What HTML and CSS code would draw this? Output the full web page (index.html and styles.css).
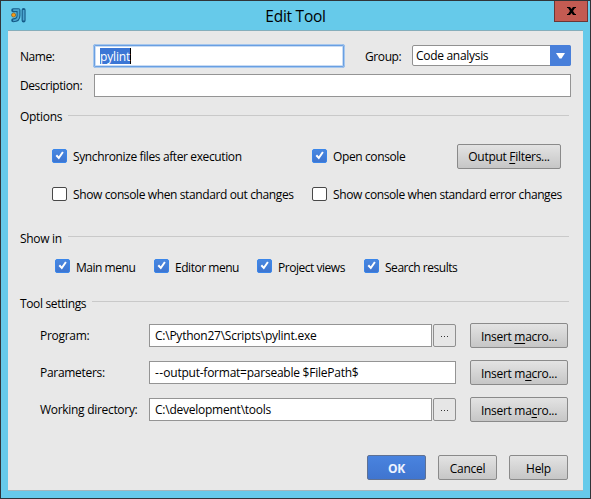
FILE: index.html
```html
<!DOCTYPE html>
<html lang="en">
<head>
<meta charset="utf-8">
<title>Edit Tool</title>
<link rel="stylesheet" href="styles.css">
</head>
<body>
<svg width="0" height="0" class="defs">
  <defs>
    <linearGradient id="blue" x1="0" y1="0" x2="0" y2="1"><stop offset="0" stop-color="#4a88e0"/><stop offset="1" stop-color="#3d74d0"/></linearGradient>
    <symbol id="on" viewBox="0 0 15 14"><rect x=".5" y=".5" width="14" height="13" rx="1.5" fill="url(#blue)" stroke="#3a86ea"/><path d="M4.3 6.3 6.8 9 10.9 3" fill="none" stroke="#fff" stroke-width="2"/></symbol>
    <symbol id="off" viewBox="0 0 15 14"><rect x=".5" y=".5" width="14" height="13" rx="1.5" fill="#fff" stroke="#484848"/></symbol>
  </defs>
</svg>
<div class="window">
  <header class="titlebar">
    <svg class="logo" width="15" height="15" viewBox="0 0 15 15">
      <path d="M2.2 2.2H7.5V7.5Q7.5 12.3 2.2 12.3M12.6 2V12.6" fill="none" stroke="#165b88" stroke-width="4" stroke-linejoin="round" stroke-linecap="round"/>
      <path d="M2.2 2.2H7.5V7.5Q7.5 12.3 2.2 12.3M12.6 2V12.6" fill="none" stroke="#4ba5d0" stroke-width="1.8"/>
      <circle cx="2.6" cy="7" r="2.1" fill="#f79a14" stroke="#7a5a2a" stroke-width=".7"/>
    </svg>
    <h1>Edit Tool</h1>
    <div class="close"><svg width="9" height="8" viewBox="0 0 9 8"><path d="M0 0H3L4.5 2 6 0H9V1H8L6 4 8 7H9V8H6L4.5 6 3 8H0V7H1L3 4 1 1H0Z"/></svg></div>
  </header>
  <main class="client">
    <div class="row name-row">
      <span class="t label">Name:</span>
      <div class="focus"><span class="t selected">pylint</span></div>
      <span class="t group">Group:</span>
      <div class="combo"><span class="t">Code analysis</span><div class="arrow"><svg width="9" height="6" viewBox="0 0 9 6"><path d="M0 0H9L5.5 5.5H3.5Z" fill="#fff"/></svg></div></div>
    </div>
    <div class="row desc-row"><span class="t label">Description:</span><div class="field"></div></div>

    <div class="heading h-options"><span class="t">Options</span><i></i></div>
    <div class="row opt-row">
      <label class="check"><svg><use href="#on"/></svg><span class="t">Synchronize files after execution</span></label>
      <label class="check"><svg><use href="#on"/></svg><span class="t">Open console</span></label>
      <div class="btn"><span class="t">Output <u>F</u>ilters...</span></div>
    </div>
    <div class="row opt-row second">
      <label class="check"><svg><use href="#off"/></svg><span class="t">Show console when standard out changes</span></label>
      <label class="check wide"><svg><use href="#off"/></svg><span class="t">Show console when standard error changes</span></label>
    </div>

    <div class="heading h-show"><span class="t">Show in</span><i></i></div>
    <div class="row show-row">
      <label class="check"><svg><use href="#on"/></svg><span class="t">Main menu</span></label>
      <label class="check"><svg><use href="#on"/></svg><span class="t">Editor menu</span></label>
      <label class="check"><svg><use href="#on"/></svg><span class="t">Project views</span></label>
      <label class="check"><svg><use href="#on"/></svg><span class="t">Search results</span></label>
    </div>

    <div class="heading h-tool"><span class="t">Tool settings</span><i></i></div>
    <div class="settings">
      <div class="setting"><span class="t">Program:</span><div class="entry"><div class="field"><span class="t">C:\Python27\Scripts\pylint.exe</span></div><div class="browse"><b></b><b></b><b></b></div></div><div class="btn"><span class="t">Insert <u>m</u>acro...</span></div></div>
      <div class="setting"><span class="t">Parameters:</span><div class="entry"><div class="field"><span class="t"><span class="dashes">--</span>output-format=parseable $FilePath$</span></div></div><div class="btn"><span class="t">Insert m<u>a</u>cro...</span></div></div>
      <div class="setting"><span class="t">Working directory:</span><div class="entry"><div class="field"><span class="t">C:\development\tools</span></div><div class="browse"><b></b><b></b><b></b></div></div><div class="btn"><span class="t">Insert ma<u>c</u>ro...</span></div></div>
    </div>
    <footer class="actions">
      <div class="btn ok"><span class="t">OK</span></div>
      <div class="btn"><span class="t">Cancel</span></div>
      <div class="btn"><span class="t">Help</span></div>
    </footer>
  </main>
</div>
</body>
</html>
```
FILE: styles.css
```css
* { box-sizing: border-box; }
body { margin: 0; overflow: hidden; font: 12px/16px "Open Sans", "Noto Sans", sans-serif; letter-spacing: -0.3px; color: #000; }
.defs { position: absolute; }
.window { width: 591px; height: 499px; border: 1px solid #303438; background: #66caea; padding: 0 7px 7px; }
.titlebar { height: 29px; display: grid; grid-template-columns: 60px 1fr 60px; }
.logo { margin: 7px 0 0 3px; }
h1 { margin: 3px 0 0; font-size: 15.5px; line-height: 24px; font-weight: 400; letter-spacing: -0.25px; text-align: center; }
.close { width: 34px; height: 21px; margin-left: 31px; border: 1px solid #6b3535; border-top: 0; background: #c35b52; display: flex; align-items: center; justify-content: center; }
.client { height: 461px; background: #e8e8e8; border-top: 1px solid #86aebb; border-bottom: 1px solid #a3b7bd; padding: 13px 12px 0; }
.t { white-space: nowrap; display: block; }
u { text-underline-offset: 2px; text-decoration-thickness: 1px; }
.row { display: flex; align-items: center; }
.name-row { height: 24px; }
.label { width: 73px; flex: none; padding-top: 2px; letter-spacing: -0.42px; }
.focus { width: 252px; height: 24px; border: 2px solid #699fe2; border-radius: 3px; box-shadow: inset 0 0 0 1px #c9dcf4; background: #fff; padding: 2px 5px; display: flex; outline: 1px solid #a6c7ed; outline-offset: -1px; }
.selected { height: 16px; line-height: 18px; background: #3b76d5; color: #fff; border-right: 1px solid #000; letter-spacing: -0.15px; }
.group { margin-left: 20px; width: 47px; padding-top: 2px; letter-spacing: -0.4px; }
.combo { width: 159px; height: 21px; margin-top: 1px; align-self: flex-start; border: 1px solid #919191; border-radius: 2px; background: #fff; display: flex; align-items: center; padding-left: 3px; }
.arrow { width: 21px; height: 21px; margin: -1px -1px -1px auto; background: #487fda; border-radius: 0 2px 2px 0; display: flex; align-items: center; justify-content: center; }
.desc-row { height: 23px; margin-top: 6px; }
.desc-row .label { width: 74px; padding-top: 1px; }
.field { height: 23px; border: 1px solid #949494; background: #fff; flex: 1; padding: 3px 5px; letter-spacing: -0.24px; }
.dashes { letter-spacing: 0.3px; }
.desc-row .field { flex: none; width: 477px; }
.heading { height: 16px; display: flex; width: 549px; }
.heading .t { width: 48px; padding-top: 1px; }
.heading i { flex: 1; height: 1px; margin-top: 7px; background: #c9c9c9; }
.h-options { margin-top: 11px; }
.h-show { margin-top: 26px; }
.h-tool { margin-top: 19px; }
.h-show .t, .h-tool .t { padding-top: 2px; }
.h-tool .t { width: 72px; letter-spacing: -0.36px; }
.check { display: flex; align-items: center; height: 16px; letter-spacing: -0.38px; }
.check svg { width: 15px; height: 14px; flex: none; margin: 0 6px 2px 0; }
.opt-row { margin: 20px 0 0 32px; display: grid; grid-template-columns: 260px 145px 104px; height: 25px; }
.opt-row.second { height: 16px; margin-top: 18px; }
.wide { grid-column: span 2; letter-spacing: -0.4px; }
.show-row { margin: 14px 0 0 35px; height: 16px; display: grid; grid-template-columns: 99px 103px 107px 120px; }
.show-row .check { letter-spacing: -0.47px; }
.show-row .t { padding-top: 2px; }
.btn { height: 25px; border: 1px solid #8a8a8a; border-radius: 2px; background: linear-gradient(#e3e3e3, #c6c6c6); display: flex; align-items: center; justify-content: center; padding-top: 1px; }
.settings { display: grid; gap: 12px; margin: 13px 0 0 20px; }
.setting { height: 25px; display: grid; grid-template-columns: 109px 307px 14px 98px; align-items: center; }
.setting > .t { padding-top: 1px; }
.setting .btn { grid-column: 4; padding-top: 2px; }
.entry { display: flex; gap: 1px; }
.browse { width: 23px; height: 23px; border: 1px solid #8f8f8f; border-radius: 2px; background: #e6e6e6; display: flex; gap: 2px; align-items: center; justify-content: center; }
.browse b { width: 1px; height: 1px; background: #333; margin-top: 2px; }
.actions { display: flex; gap: 12px; justify-content: flex-end; margin: 33px 3px 0 0; }
.actions .btn { width: 59px; padding-top: 2px; }
.actions .ok { background: linear-gradient(#4983df, #4075cf); border-color: #5f7193; color: #edf3ff; font-weight: 700; }
```
